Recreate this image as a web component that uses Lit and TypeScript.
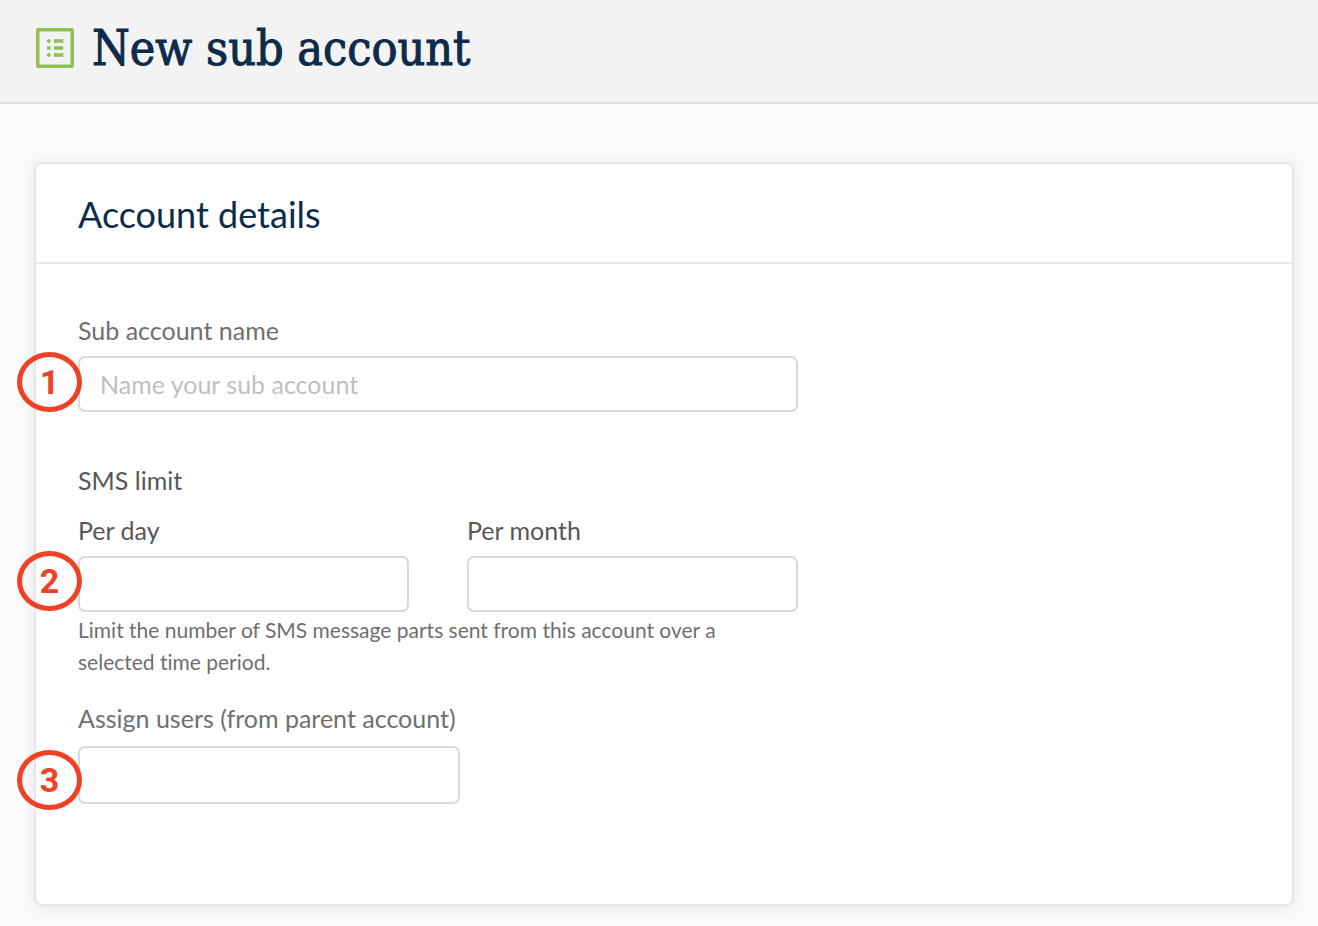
import { LitElement, html, css } from "lit";
import { customElement } from "lit/decorators.js";

@customElement("app-root")
export class AppRoot extends LitElement {
  static styles = css`
    :host {
      display: block;
      min-height: 100vh;
      background: #fafafa;
      color: #6f6f6f;
      font: 25px/32px Lato, "Open Sans", sans-serif;
      font-variant-ligatures: none;
    }
    * {
      box-sizing: border-box;
    }
    .page-header {
      display: flex;
      align-items: center;
      gap: 18px;
      padding: 16px 36px 22px;
      background: #f3f3f3;
      border-bottom: 2px solid #dcdcdc;
    }
    .page-icon {
      flex: none;
      width: 38px;
      height: 40px;
    }
    h1 {
      margin: 0;
      color: #0d2b4b;
      font: 500 48px/64px "Roboto Slab", "DejaVu Serif Condensed", serif;
      -webkit-text-stroke: 1px #0d2b4b;
    }
    main {
      padding: 58px 24px 20px 34px;
    }
    .card {
      background: #fff;
      border: 2px solid #e6e6e6;
      border-radius: 8px;
      box-shadow: 0 2px 16px rgba(0, 0, 0, 0.08);
    }
    h2 {
      margin: 0;
      padding: 26px 42px 24px;
      border-bottom: 2px solid #e6e6e6;
      color: #0d2b4b;
      font-size: 36px;
      font-weight: 400;
      line-height: 48px;
    }
    .form {
      max-width: 804px;
      padding: 50px 42px 100px;
    }
    label {
      display: block;
      margin-bottom: 10px;
    }
    .dark {
      color: #575757;
    }
    .control {
      position: relative;
    }
    input {
      display: block;
      width: 100%;
      height: 56px;
      margin: 0;
      padding: 0 20px;
      border: 2px solid #d9d9d9;
      border-radius: 7px;
      background: #fff;
      color: #575757;
      font: inherit;
    }
    input::placeholder {
      color: #bfbfbf;
      opacity: 1;
    }
    fieldset {
      margin: 52px 0 0;
      padding: 0;
      border: 0;
      min-width: 0;
    }
    legend {
      padding: 0;
      margin-bottom: 18px;
    }
    .limits {
      display: grid;
      grid-template-columns: 1fr 1fr;
      gap: 58px;
    }
    .help {
      max-width: 680px;
      margin: 2px 0 24px;
      font-size: 21px;
    }
    .users {
      width: 382px;
      max-width: 100%;
    }
    .users label {
      margin-bottom: 12px;
      white-space: nowrap;
    }
    .users input {
      height: 58px;
    }
    .step {
      position: absolute;
      left: -61px;
      top: -4px;
      width: 65px;
      height: 60px;
      display: flex;
      align-items: center;
      justify-content: center;
      border: 5px solid #ee4125;
      border-radius: 50%;
      color: #ee4125;
      font: 700 34px/40px Roboto, sans-serif;
    }
    .limits .step {
      top: -5px;
    }
    .users .step {
      top: 4px;
    }
  `;

  render() {
    return html`
      <header class="page-header">
        <svg class="page-icon" viewBox="0 0 38 40" fill="none" stroke="#8cc152" aria-hidden="true">
          <rect x="1.75" y="1.75" width="34.5" height="36.5" rx="0.5" stroke-width="3.5" />
          <path
            d="M12.8 13h.1M12.8 20h.1M12.8 27h.1"
            stroke-width="3.8"
            stroke-linecap="round"
          />
          <path d="M18 13h9.3M18 20h9.3M18 27h9.3" stroke-width="3.6" />
        </svg>
        <h1>New sub account</h1>
      </header>
      <main>
        <section class="card">
          <h2>Account details</h2>
          <form class="form">
            <label for="name">Sub account name</label>
            <div class="control">
              <input id="name" type="text" placeholder="Name your sub account" />
              <span class="step">1</span>
            </div>
            <fieldset>
              <legend class="dark">SMS limit</legend>
              <div class="limits">
                <div>
                  <label class="dark" for="day">Per day</label>
                  <div class="control">
                    <input id="day" type="text" inputmode="numeric" />
                    <span class="step">2</span>
                  </div>
                </div>
                <div>
                  <label class="dark" for="month">Per month</label>
                  <input id="month" type="text" inputmode="numeric" />
                </div>
              </div>
              <p class="help">
                Limit the number of SMS message parts sent from this account over a selected time
                period.
              </p>
            </fieldset>
            <div class="users">
              <label for="users">Assign users (from parent account)</label>
              <div class="control">
                <input id="users" type="text" />
                <span class="step">3</span>
              </div>
            </div>
          </form>
        </section>
      </main>
    `;
  }
}
